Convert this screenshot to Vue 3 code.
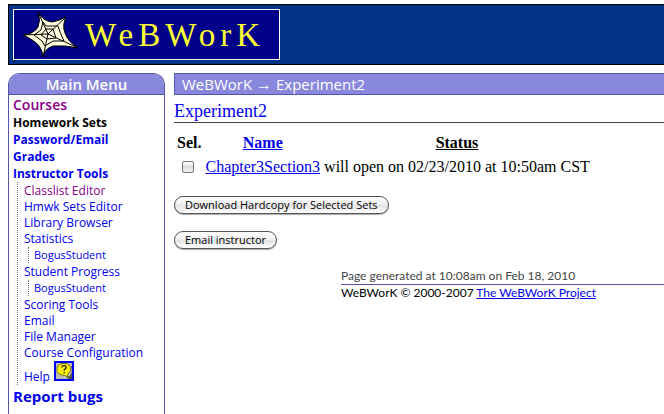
<template>
  <div class="page">
    <header class="masthead">
      <a class="logo" href="#" aria-label="WeBWorK">
        <svg class="web" viewBox="0 0 58 48" aria-hidden="true">
          <path class="web-fill" d="M16 1 Q21 10 30 11 Q37 10 44 6 Q40 14 43 22 Q46 31 56 37 Q42 34 31 35 Q22 38 21 46 Q20 36 13 31 Q8 27 1 24 Q12 23 16 16 Q19 9 16 1 Z" />
          <path class="web-line" d="M26 23 L16 1 M26 23 L44 6 M26 23 L56 37 M26 23 L21 46 M26 23 L1 24" />
          <path class="web-line" d="M21 11 L24 15 L36 15 L38 21 L42 30 L31 30 L23 35 L20 30 L12 24 L19 19 Z" />
          <path class="web-line" d="M24 18 L31 18 L34 27 L25 28 L19 24 Z" />
        </svg>
        <span class="logo-text">WeBWorK</span>
      </a>
    </header>

    <div class="columns">
      <nav class="menu">
        <h2 class="menu-title">Main Menu</h2>
        <ul class="menu-list">
          <li class="top large"><a class="visited" href="#">Courses</a></li>
          <li class="top"><strong>Homework Sets</strong></li>
          <li class="top"><a href="#">Password/Email</a></li>
          <li class="top"><a href="#">Grades</a></li>
          <li class="top">
            <a href="#">Instructor Tools</a>
            <ul class="tools">
              <li v-for="tool in tools" :key="tool.name">
                <a :class="{ visited: tool.visited }" href="#">{{ tool.name }}</a>
                <ul v-if="tool.student" class="students">
                  <li><a href="#">{{ tool.student }}</a></li>
                </ul>
              </li>
              <li>
                <a class="help" href="#">Help
                  <svg class="help-icon" viewBox="0 0 20 20" aria-hidden="true">
                    <rect width="20" height="20" fill="#0000ee" />
                    <rect x="2" y="2" width="16" height="16" fill="#bdbdb5" />
                    <path d="M17 5 Q20 14 13 16 L15 18 H18 V5 Z" fill="#55554a" />
                    <path d="M10 2.5 C5 2.5 3 5 3 8.5 C3 12 5.5 14 9 14 Q12 14 14 17 Q13 14 14 13 C18 10 18 2.5 10 2.5 Z" fill="#fff200" stroke="#444400" stroke-width="0.7" />
                    <path d="M7.8 6.5 Q8 4.7 10 4.7 Q12.3 4.7 12.2 6.5 Q12 7.5 10.2 8.7 V9.8 M10.2 11 V12.2" fill="none" stroke="#222200" stroke-width="1.3" />
                  </svg>
                </a>
              </li>
            </ul>
          </li>
          <li class="top report"><a href="#">Report bugs</a></li>
        </ul>
      </nav>

      <main class="content">
        <div class="path">WeBWorK <span class="arrow">→</span> Experiment2</div>
        <h1 class="title">Experiment2</h1>

        <form @submit.prevent>
          <table class="sets">
            <thead>
              <tr>
                <th>Sel.</th>
                <th><a href="#">Name</a></th>
                <th><u>Status</u></th>
              </tr>
            </thead>
            <tbody>
              <tr v-for="set in sets" :key="set.name">
                <td><input v-model="set.selected" class="check" type="checkbox" :aria-label="set.name" /></td>
                <td><a href="#">{{ set.name }}</a></td>
                <td>{{ set.status }}</td>
              </tr>
            </tbody>
          </table>
          <button class="pill" type="submit">Download Hardcopy for Selected Sets</button>
        </form>
        <form @submit.prevent>
          <button class="pill" type="submit">Email instructor</button>
        </form>

        <footer class="footer">
          <div class="generated">Page generated at 10:08am on Feb 18, 2010</div>
          <div>WeBWorK © 2000-2007 <a href="#">The WeBWorK Project</a></div>
        </footer>
      </main>
    </div>
  </div>
</template>

<script setup>
import { ref } from 'vue';

const tools = [
  { name: 'Classlist Editor', visited: true },
  { name: 'Hmwk Sets Editor' },
  { name: 'Library Browser' },
  { name: 'Statistics', student: 'BogusStudent' },
  { name: 'Student Progress', student: 'BogusStudent' },
  { name: 'Scoring Tools' },
  { name: 'Email' },
  { name: 'File Manager' },
  { name: 'Course Configuration' }
];

const sets = ref([
  { name: 'Chapter3Section3', status: 'will open on 02/23/2010 at 10:50am CST', selected: false }
]);
</script>

<style>
body {
  background: #fff;
}
</style>

<style scoped>
.page {
  box-sizing: border-box;
  min-height: 100vh;
  padding: 4px 0 0 8px;
  display: flex;
  flex-direction: column;
  gap: 8px;
  font-family: "Open Sans", "Noto Sans", sans-serif;
  font-size: 12px;
  color: #000;
}

a {
  color: #0000ee;
}

.masthead {
  display: flex;
  padding: 4px;
  background: #003388;
  border: 1px solid #000;
  border-right: 0;
}

.logo {
  box-sizing: border-box;
  width: 267px;
  height: 51px;
  padding-left: 8px;
  display: flex;
  align-items: center;
  gap: 5px;
  background: #000088;
  border: 1px solid #fff;
  text-decoration: none;
}

.web {
  width: 58px;
  height: 48px;
}

.web-fill {
  fill: #ffffdd;
  stroke: #000;
}

.web-line {
  fill: none;
  stroke: #000;
}

.logo-text {
  color: #ffff33;
  font-family: "Liberation Serif", serif;
  font-size: 33px;
  line-height: 46px;
  letter-spacing: 5px;
}

.columns {
  flex: 1;
  display: flex;
  gap: 9px;
}

.menu {
  box-sizing: border-box;
  flex: 0 0 157px;
  border: 1px solid #5555aa;
  border-bottom: 0;
  border-radius: 12px 12px 0 0;
  overflow: hidden;
}

.menu-title {
  margin: 0;
  background: #8888dd;
  border-bottom: 1px solid #5555aa;
  color: #fff;
  font-size: 15px;
  font-weight: 600;
  line-height: 20px;
  text-align: center;
}

.menu ul {
  margin: 0;
  padding: 0;
  list-style: none;
}

.menu a {
  text-decoration: none;
}

.menu a.visited {
  color: #880088;
}

.menu .menu-list {
  padding-left: 4px;
}

.top {
  font-weight: 700;
  line-height: 17px;
}

.top strong {
  font-weight: 700;
}

.top.large {
  font-size: 14px;
  font-weight: 600;
  line-height: 19px;
}

.top.report {
  font-size: 15px;
  line-height: 22px;
}

.menu .tools {
  margin-left: 4px;
  padding: 1px 0 0 6px;
  border-left: 1px dotted #777;
  font-weight: 400;
  line-height: 16px;
}

.menu .students {
  margin: 0 0 1px 4px;
  padding-left: 5px;
  border-left: 1px dotted #777;
  font-size: 11px;
}

.help {
  height: 24px;
  display: flex;
  align-items: flex-end;
  gap: 4px;
}

.help-icon {
  width: 20px;
  height: 20px;
  margin-bottom: 4px;
}

.content {
  flex: 1;
  min-width: 0;
  font-family: "Liberation Serif", serif;
  font-size: 16px;
}

.path {
  padding-left: 7px;
  background: #8888dd;
  border: 1px solid #5555aa;
  border-right: 0;
  color: #fff;
  font-family: "Open Sans", "Noto Sans", sans-serif;
  font-size: 15px;
  line-height: 20px;
}

.arrow {
  font-family: "Liberation Serif", serif;
  font-size: 16px;
  line-height: 1;
}

.title {
  margin: 6px 0 8px;
  border-bottom: 1px solid #444;
  color: #0000ee;
  font-size: 18px;
  font-weight: 400;
  line-height: 21px;
}

.sets {
  border-collapse: separate;
  border-spacing: 0;
  line-height: 24px;
}

.sets th,
.sets td {
  padding: 0 2px;
}

.sets th:first-child {
  padding-left: 3px;
}

.sets td:first-child {
  padding-left: 8px;
}

.check {
  appearance: none;
  display: block;
  width: 12px;
  height: 12px;
  margin: 0;
  background: linear-gradient(#fff, #ddd 50%, #f4f4f4);
  border: 1px solid #777;
  border-radius: 2px;
}

.check:checked {
  background: #8888dd;
}

.pill {
  height: 18px;
  margin: 17px 0 1px;
  padding: 0 10px;
  display: block;
  background: linear-gradient(#fff, #eee 50%, #e2e2e2 51%, #fff);
  border: 1px solid #555;
  border-radius: 9px;
  box-shadow: 0 1px 1px #aaa;
  color: #000;
  font-family: "Open Sans", "Noto Sans", sans-serif;
  font-size: 11px;
  line-height: 16px;
}

.footer {
  margin: 19px 0 0 167px;
  font-family: Lato, "Open Sans", sans-serif;
  font-size: 12px;
  line-height: 16px;
}

.generated {
  border-bottom: 1px solid #5555aa;
  color: #444;
}
</style>
